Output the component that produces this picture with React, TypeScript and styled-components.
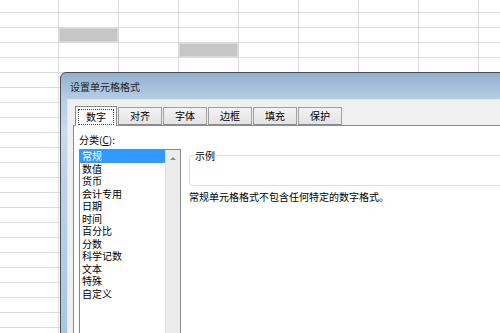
import { FC } from "react";
import styled, { createGlobalStyle } from "styled-components";

const GlobalStyle = createGlobalStyle`
    html, body {
        margin: 0;
        padding: 0;
        background: #ffffff;
    }

    body {
        font-family: "Noto Sans CJK SC", "Noto Sans", sans-serif;
        font-size: 10px;
        color: #000000;
    }
`;

const COLS = 9;
const ROWS = 23;
// cells that are shaded grey in the sheet behind the dialog
const shaded = new Set(["2-1", "3-3"]);

const categories = [
    "常规",
    "数值",
    "货币",
    "会计专用",
    "日期",
    "时间",
    "百分比",
    "分数",
    "科学记数",
    "文本",
    "特殊",
    "自定义",
];

const tabs = ["数字", "对齐", "字体", "边框", "填充", "保护"];

const App: FC = () => {
    const cells = [];
    for (let r = 0; r < ROWS; r++) {
        for (let c = 0; c < COLS; c++) {
            cells.push(<Cell key={`${r}-${c}`} $shaded={shaded.has(`${r}-${c}`)} />);
        }
    }

    return (
        <>
            <GlobalStyle />
            <Screen>
                <Sheet>{cells}</Sheet>

                <Dialog>
                    <TitleBar>设置单元格格式</TitleBar>
                    <Client>
                        <TabStrip>
                            {tabs.map((t, i) => (
                                <Tab key={t} $active={i === 0}>
                                    {i === 0 ? <FocusBox>{t}</FocusBox> : t}
                                </Tab>
                            ))}
                        </TabStrip>
                        <TabPanel>
                            <LeftColumn>
                                <FieldLabel>
                                    分类(<u>C</u>):
                                </FieldLabel>
                                <ListBox>
                                    <Items>
                                        {categories.map((c, i) => (
                                            <Item key={c} $selected={i === 0}>
                                                {c}
                                            </Item>
                                        ))}
                                    </Items>
                                    <ScrollBar>
                                        <ArrowUp />
                                    </ScrollBar>
                                </ListBox>
                            </LeftColumn>
                            <RightColumn>
                                <SampleGroup>
                                    <Legend>示例</Legend>
                                </SampleGroup>
                                <Description>常规单元格格式不包含任何特定的数字格式。</Description>
                            </RightColumn>
                        </TabPanel>
                    </Client>
                </Dialog>
            </Screen>
        </>
    );
};

export default App;

const Screen = styled.div`
    position: relative;
    width: 500px;
    height: 333px;
    overflow: hidden;
    background: #ffffff;
`;

const Sheet = styled.div`
    display: grid;
    grid-template-columns: 59px repeat(8, 60px);
    grid-template-rows: 13px repeat(22, 15px);
`;

const Cell = styled.div<{ $shaded: boolean }>`
    box-sizing: border-box;
    border-right: 1px solid #dcdcdc;
    border-bottom: 1px solid #dcdcdc;
    background: ${(p) => (p.$shaded ? "#c6c6c6" : "#ffffff")};
    box-shadow: ${(p) => (p.$shaded ? "inset 0 0 0 1px #d8d8d8" : "none")};
`;

const Dialog = styled.div`
    position: absolute;
    left: 60px;
    top: 72px;
    width: 460px;
    height: 280px;
    box-sizing: border-box;
    border: 1px solid #4d4d4d;
    border-radius: 6px 6px 0 0;
    background: linear-gradient(to bottom, #93b0cf 0px, #b5cde7 26px, #c9dbee 60px, #bcd2ea 110px, #a9c4e3 280px);
    display: flex;
    flex-direction: column;
`;

const TitleBar = styled.div`
    height: 26px;
    flex: none;
    padding-left: 9px;
    display: flex;
    align-items: center;
    font-size: 10px;
    color: #1e1e1e;
`;

const Client = styled.div`
    flex: 1;
    margin-left: 6px;
    background: #f0f0f0;
    border-top: 1px solid #dfe6ee;
    border-left: 1px solid #dfe6ee;
    padding: 6px 0 0 5px;
    display: flex;
    flex-direction: column;
`;

const TabStrip = styled.div`
    display: flex;
    align-items: flex-end;
    height: 19px;
    padding-left: 2px;
    gap: 1px;
    position: relative;
    z-index: 1;
`;

const Tab = styled.div<{ $active: boolean }>`
    box-sizing: border-box;
    height: ${(p) => (p.$active ? "20px" : "18px")};
    margin-bottom: ${(p) => (p.$active ? "-1px" : "0")};
    padding: 0 ${(p) => (p.$active ? "2px" : "11px")};
    border: 1px solid ${(p) => (p.$active ? "#898c95" : "#a0a0a0")};
    border-bottom: ${(p) => (p.$active ? "none" : "1px solid #898c95")};
    background: ${(p) => (p.$active ? "#ffffff" : "linear-gradient(to bottom, #f3f3f3, #e3e3e3)")};
    display: flex;
    align-items: center;
    justify-content: center;
    font-size: 10px;
    line-height: 1;
    white-space: nowrap;
`;

const FocusBox = styled.span`
    padding: 2px 7px;
    border: 1px dotted #444444;
`;

const TabPanel = styled.div`
    flex: 1;
    background: #ffffff;
    border: 1px solid #898c95;
    padding: 8px 0 0 5px;
    display: flex;
    gap: 8px;
`;

const LeftColumn = styled.div`
    width: 102px;
    display: flex;
    flex-direction: column;
`;

const FieldLabel = styled.div`
    height: 12px;
    line-height: 12px;
    font-size: 10px;
    margin-bottom: 3px;

    u {
        text-decoration: underline;
    }
`;

const ListBox = styled.div`
    height: 200px;
    border: 1px solid #828790;
    display: flex;
    background: #ffffff;
`;

const Items = styled.div`
    flex: 1;
    display: flex;
    flex-direction: column;
`;

const Item = styled.div<{ $selected: boolean }>`
    height: 12.5px;
    line-height: 12.5px;
    padding-left: 2px;
    font-size: 10px;
    white-space: nowrap;
    background: ${(p) => (p.$selected ? "#3399ff" : "transparent")};
    color: ${(p) => (p.$selected ? "#ffffff" : "#000000")};
`;

const ScrollBar = styled.div`
    width: 15px;
    background: #ececec;
    border-left: 1px solid #e0e0e0;
    display: flex;
    justify-content: center;
    padding-top: 7px;
    box-sizing: border-box;
`;

const ArrowUp = styled.div`
    width: 0;
    height: 0;
    border-left: 3px solid transparent;
    border-right: 3px solid transparent;
    border-bottom: 3px solid #8a8a8a;
`;

const RightColumn = styled.div`
    flex: 1;
    padding-top: 21px;
    display: flex;
    flex-direction: column;
`;

const SampleGroup = styled.div`
    position: relative;
    height: 31px;
    border: 1px solid #d5dfe5;
    border-radius: 3px;
    box-sizing: border-box;
`;

const Legend = styled.span`
    position: absolute;
    left: 4px;
    top: -6px;
    padding: 0 1px;
    background: #ffffff;
    font-size: 10px;
    line-height: 12px;
`;

const Description = styled.div`
    margin-top: 5px;
    font-size: 10px;
    line-height: 12px;
    white-space: nowrap;
`;
